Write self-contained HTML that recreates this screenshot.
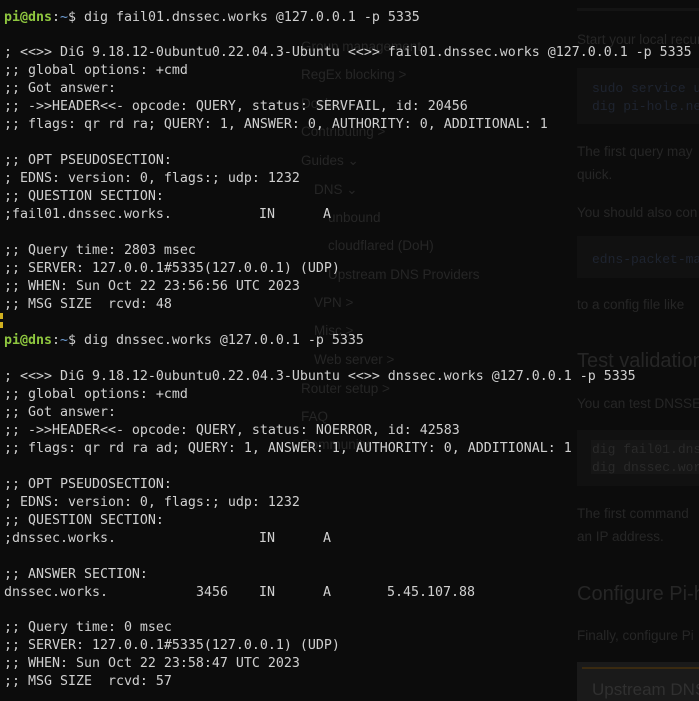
<!DOCTYPE html>
<html><head><meta charset="utf-8"><style>
html,body{margin:0;padding:0;background:#0c0c0c;width:699px;height:701px;overflow:hidden;position:relative}
#wrap{position:absolute;left:0;top:0;width:699px;height:701px;overflow:hidden}
.bg{position:absolute;font-family:"Liberation Sans",sans-serif;font-size:13.5px;color:#262626;white-space:nowrap}
.bgm{position:absolute;font-family:"Liberation Mono",monospace;font-size:13px;color:#1e2430;white-space:nowrap}
.box{position:absolute;background:#111;}
.t{position:absolute;left:4px;top:8.5px;font-family:"DejaVu Sans Mono",monospace;font-size:13.29px;line-height:17.97px;color:#d0d0d0;white-space:pre;margin:0}
.g{color:#8ec63f;font-weight:bold}.b{color:#6f9fd6}
.p{position:absolute;font-family:"DejaVu Sans Mono",monospace;font-size:13.29px;line-height:18px;color:#d0d0d0;white-space:pre}
.y{position:absolute;left:0;width:3px;height:6px;background:#d0b020}
</style></head><body><div id="wrap">
<div class="box" style="left:577px;top:8px;width:122px;height:3px;background:#141414"></div>
<div class="box" style="left:577px;top:68px;width:122px;height:56px"></div>
<div class="box" style="left:577px;top:236px;width:122px;height:42px"></div>
<div class="box" style="left:577px;top:430px;width:122px;height:56px"></div>
<div class="box" style="left:591px;top:440px;width:108px;height:34px;background:#161616"></div>
<div class="box" style="left:577px;top:662px;width:122px;height:39px;background:#1a1a1a"></div>
<div class="box" style="left:582px;top:667px;width:117px;height:2px;background:#3a2a10"></div>
<div class="bg" style="left:301px;top:39px">Group management</div>
<div class="bg" style="left:301px;top:67px">RegEx blocking &gt;</div>
<div class="bg" style="left:301px;top:96px">Docker</div>
<div class="bg" style="left:301px;top:124px">Contributing &gt;</div>
<div class="bg" style="left:301px;top:153px">Guides ⌄</div>
<div class="bg" style="left:314px;top:182px">DNS ⌄</div>
<div class="bg" style="left:328px;top:210px">unbound</div>
<div class="bg" style="left:328px;top:238px">cloudflared (DoH)</div>
<div class="bg" style="left:328px;top:267px">Upstream DNS Providers</div>
<div class="bg" style="left:314px;top:295px">VPN &gt;</div>
<div class="bg" style="left:314px;top:323px">Misc &gt;</div>
<div class="bg" style="left:314px;top:352px">Web server &gt;</div>
<div class="bg" style="left:301px;top:381px">Router setup &gt;</div>
<div class="bg" style="left:301px;top:409px">FAQ</div>
<div class="bg" style="left:301px;top:437px">Community</div>
<div class="bg" style="left:577px;top:32px">Start your local recursive</div>
<div class="bgm" style="left:592px;top:81px">sudo service unbound</div>
<div class="bgm" style="left:592px;top:99px">dig pi-hole.net</div>
<div class="bg" style="left:577px;top:144px">The first query may</div>
<div class="bg" style="left:577px;top:167px">quick.</div>
<div class="bg" style="left:577px;top:205px">You should also con</div>
<div class="bgm" style="left:592px;top:252px">edns-packet-max</div>
<div class="bg" style="left:577px;top:297px">to a config file like</div>
<div class="bg" style="left:577px;top:350px;font-size:20px">Test validation</div>
<div class="bg" style="left:577px;top:396px">You can test DNSSEC</div>
<div class="bgm" style="left:592px;top:442px;color:#2a2a2a">dig fail01.dnssec</div>
<div class="bgm" style="left:592px;top:460px;color:#2a2a2a">dig dnssec.works</div>
<div class="bg" style="left:577px;top:506px">The first command</div>
<div class="bg" style="left:577px;top:529px">an IP address.</div>
<div class="bg" style="left:577px;top:583px;font-size:20px">Configure Pi-hole</div>
<div class="bg" style="left:577px;top:628px">Finally, configure Pi</div>
<div class="bg" style="left:592px;top:680px;font-size:17px;color:#303030">Upstream DNS</div>
<div class="y" style="top:313px"></div><div class="y" style="top:322px"></div>
<pre class="t"><span class="g">pi@dns</span>:<span class="b">~</span>$ dig fail01.dnssec.works @127.0.0.1 -p 5335

; &lt;&lt;&gt;&gt; DiG 9.18.12-0ubuntu0.22.04.3-Ubuntu &lt;&lt;&gt;&gt; fail01.dnssec.works @127.0.0.1 -p 5335
;; global options: +cmd
;; Got answer:
;; -&gt;&gt;HEADER&lt;&lt;- opcode: QUERY, status: SERVFAIL, id: 20456
;; flags: qr rd ra; QUERY: 1, ANSWER: 0, AUTHORITY: 0, ADDITIONAL: 1

;; OPT PSEUDOSECTION:
; EDNS: version: 0, flags:; udp: 1232
;; QUESTION SECTION:
;fail01.dnssec.works.

;; Query time: 2803 msec
;; SERVER: 127.0.0.1#5335(127.0.0.1) (UDP)
;; WHEN: Sun Oct 22 23:56:56 UTC 2023
;; MSG SIZE  rcvd: 48

<span class="g">pi@dns</span>:<span class="b">~</span>$ dig dnssec.works @127.0.0.1 -p 5335

; &lt;&lt;&gt;&gt; DiG 9.18.12-0ubuntu0.22.04.3-Ubuntu &lt;&lt;&gt;&gt; dnssec.works @127.0.0.1 -p 5335
;; global options: +cmd
;; Got answer:
;; -&gt;&gt;HEADER&lt;&lt;- opcode: QUERY, status: NOERROR, id: 42583
;; flags: qr rd ra ad; QUERY: 1, ANSWER: 1, AUTHORITY: 0, ADDITIONAL: 1

;; OPT PSEUDOSECTION:
; EDNS: version: 0, flags:; udp: 1232
;; QUESTION SECTION:
;dnssec.works.

;; ANSWER SECTION:
dnssec.works.

;; Query time: 0 msec
;; SERVER: 127.0.0.1#5335(127.0.0.1) (UDP)
;; WHEN: Sun Oct 22 23:58:47 UTC 2023
;; MSG SIZE  rcvd: 57</pre>
<span class="p" style="left:259px;top:206px">IN</span><span class="p" style="left:323px;top:206px">A</span>
<span class="p" style="left:259px;top:530px">IN</span><span class="p" style="left:323px;top:530px">A</span>
<span class="p" style="left:196px;top:584px">3456</span><span class="p" style="left:259px;top:584px">IN</span><span class="p" style="left:323px;top:584px">A</span><span class="p" style="left:387px;top:584px">5.45.107.88</span>
</div></body></html>
